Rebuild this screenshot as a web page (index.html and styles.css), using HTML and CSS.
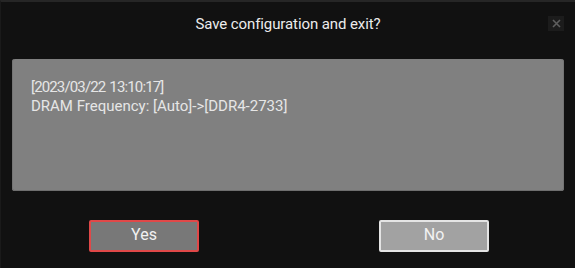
FILE: index.html
```html
<!DOCTYPE html>
<html>
<head>
<meta charset="utf-8">
<link rel="stylesheet" href="styles.css">
</head>
<body>
<div class="dialog">
  <div class="header">
    <span></span>
    <div class="title">Save configuration and exit?</div>
    <button class="close" aria-label="Close">
      <svg width="9" height="9" viewBox="0 0 9 9"><path d="M1 1L8 8M8 1L1 8" stroke="#5e5e5e" stroke-width="1.6" fill="none"/></svg>
    </button>
  </div>
  <div class="log">
    <div class="line stamp">[2023/03/22 13:10:17]</div>
    <div class="line">DRAM Frequency: [Auto]-&gt;[DDR4-2733]</div>
  </div>
  <div class="actions">
    <button class="btn btn-yes">Yes</button>
    <button class="btn btn-no">No</button>
  </div>
</div>
</body>
</html>
```

FILE: styles.css
```css
html, body {
  margin: 0;
  padding: 0;
  background: #ffffff;
}

.dialog {
  width: 575px;
  height: 268px;
  box-sizing: border-box;
  background: #111111;
  border-top: 2px solid #262626;
  border-left: 1px solid #1a1a1a;
  padding: 0 11px 0 11px;
  display: flex;
  flex-direction: column;
  font-family: Roboto, "Liberation Sans", sans-serif;
}

.header {
  height: 57px;
  display: grid;
  grid-template-columns: 16px 1fr 16px;
  align-items: start;
}

.title {
  justify-self: center;
  margin-top: 13px;
  font-size: 15px;
  line-height: 18px;
  color: #ececec;
  letter-spacing: -0.1px;
}

.close {
  margin-top: 14px;
  width: 16px;
  height: 15px;
  padding: 0;
  border: none;
  background: #1c1c1c;
  display: flex;
  align-items: center;
  justify-content: center;
}

.log {
  height: 132px;
  box-sizing: border-box;
  background: #808080;
  border-radius: 3px;
  box-shadow: inset 0 -1px 0 #6e6e6e, inset 1px 0 0 #747474, inset -1px 0 0 #747474;
  padding: 19px 19px;
  color: #e6e6e6;
  font-size: 15px;
  line-height: 19px;
}

.stamp {
  letter-spacing: -0.85px;
  word-spacing: 1px;
}

.actions {
  display: flex;
  justify-content: space-between;
  padding: 29px 75px 0 77px;
}

.btn {
  width: 110px;
  height: 32px;
  box-sizing: border-box;
  border-radius: 2px;
  font-family: Roboto, "Liberation Sans", sans-serif;
  font-size: 16px;
  color: #f2f2f2;
  padding: 0 0 3px 0;
}

.btn-yes {
  background: #787878;
  border: 2px solid #e04848;
}

.btn-no {
  background: #a2a2a2;
  border: 2px solid #e4e4e4;
}
```
